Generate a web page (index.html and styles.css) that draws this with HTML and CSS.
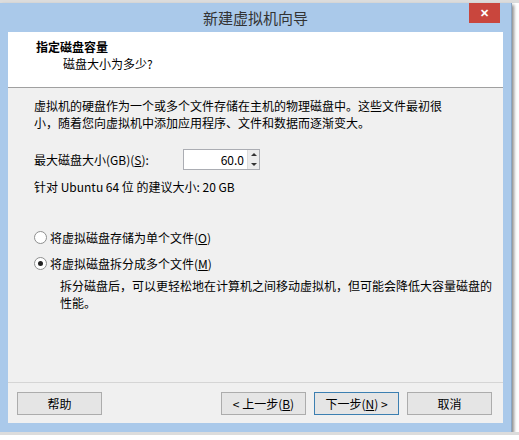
FILE: index.html
```html
<!DOCTYPE html>
<html lang="zh-CN">
<head>
    <meta charset="utf-8">
    <title>新建虚拟机向导</title>
    <link rel="stylesheet" href="styles.css">
</head>
<body>
    <div class="window">
        <div class="titlebar">
            <span class="title">新建虚拟机向导</span>
            <button type="button" class="close_button">✕</button>
        </div>
        <div class="client">
            <div class="header">
                <div class="header_title">指定磁盘容量</div>
                <div class="header_sub">磁盘大小为多少?</div>
            </div>
            <div class="content">
                <p class="intro">虚拟机的硬盘作为一个或多个文件存储在主机的物理磁盘中。这些文件最初很<br>小，随着您向虚拟机中添加应用程序、文件和数据而逐渐变大。</p>

                <div class="size_row">
                    <label for="disk_size">最大磁盘大小(GB)(<u>S</u>):</label>
                    <div class="spin_box">
                        <input type="text" id="disk_size" value="60.0">
                        <div class="spin_buttons">
                            <span class="spin_up"></span>
                            <span class="spin_down"></span>
                        </div>
                    </div>
                </div>
                <div class="hint">针对 Ubuntu 64 位 的建议大小: 20 GB</div>

                <div class="radio_group">
                    <label class="radio"><span class="radio_dot"></span>将虚拟磁盘存储为单个文件(<u>O</u>)</label>
                    <label class="radio"><span class="radio_dot checked"></span>将虚拟磁盘拆分成多个文件(<u>M</u>)</label>
                    <p class="radio_note">拆分磁盘后，可以更轻松地在计算机之间移动虚拟机，但可能会降低大容量磁盘的<br>性能。</p>
                </div>
            </div>
            <div class="footer">
                <button type="button" class="btn">帮助</button>
                <div class="nav_buttons">
                    <button type="button" class="btn">&lt; 上一步(<u>B</u>)</button>
                    <button type="button" class="btn default">下一步(<u>N</u>) &gt;</button>
                    <button type="button" class="btn">取消</button>
                </div>
            </div>
        </div>
    </div>
</body>
</html>
```

FILE: styles.css
```css
body {
    margin: 0;
    padding-top: 3px;
    background: linear-gradient(#dcdcdc 0, #dcdcdc 3px, #fff 3px);
    font-family: "Microsoft YaHei", "Noto Sans CJK SC", sans-serif;
    font-size: 12px;
    color: #000;
}
.window {
    width: 495px;
    padding: 0 8px 9px 8px;
    background-color: #aac9ea;
    border-right: 1px solid #8aa6c4;
    box-shadow: 2px 2px 3px rgba(0, 0, 0, 0.45);
}
.titlebar {
    position: relative;
    height: 29px;
    display: flex;
    align-items: center;
    justify-content: center;
}
.title {
    font-size: 15px;
    color: #333;
}
.close_button {
    position: absolute;
    right: 3px;
    top: 0;
    width: 31px;
    height: 20px;
    border: none;
    background-color: #c9463d;
    color: #fff;
    font-size: 11px;
    font-weight: bold;
    padding: 0;
}
.client {
    background-color: #f0f0f0;
    height: 391px;
    display: flex;
    flex-direction: column;
}
.header {
    background-color: #fff;
    height: 56px;
    border-bottom: 1px solid #a0a0a0;
    padding: 0 0 0 28px;
    box-sizing: border-box;
}
.header_title {
    font-weight: bold;
    padding-top: 6px;
    line-height: 17px;
}
.header_sub {
    padding-left: 27px;
    line-height: 17px;
}
.content {
    flex: 1;
    padding: 9px 12px 0 26px;
    white-space: nowrap;
}
.intro {
    margin: 0;
    line-height: 17px;
}
.size_row {
    display: flex;
    align-items: center;
    margin-top: 18px;
}
.size_row label {
    width: 149px;
}
.spin_box {
    display: flex;
    width: 77px;
    height: 21px;
    border: 1px solid #abadb3;
    background-color: #fff;
    box-sizing: border-box;
}
.spin_box input {
    width: 60px;
    border: none;
    padding: 0 3px 0 0;
    text-align: right;
    font: inherit;
    outline: none;
}
.spin_buttons {
    flex: 1;
    display: flex;
    flex-direction: column;
    border-left: 1px solid #dcdcdc;
}
.spin_up, .spin_down {
    flex: 1;
    display: flex;
    align-items: center;
    justify-content: center;
    background-color: #ececec;
}
.spin_up::after {
    content: "";
    border-left: 3px solid transparent;
    border-right: 3px solid transparent;
    border-bottom: 3px solid #333;
}
.spin_down::after {
    content: "";
    border-left: 3px solid transparent;
    border-right: 3px solid transparent;
    border-top: 3px solid #333;
}
.hint {
    margin-top: 8px;
    line-height: 17px;
}
.radio_group {
    margin-top: 34px;
}
.radio {
    display: flex;
    align-items: center;
    line-height: 17px;
    margin-bottom: 9px;
}
.radio_dot {
    width: 11px;
    height: 11px;
    border: 1px solid #8e8f8f;
    border-radius: 50%;
    background-color: #fff;
    margin-right: 3px;
    display: flex;
    align-items: center;
    justify-content: center;
}
.radio_dot.checked::after {
    content: "";
    width: 5px;
    height: 5px;
    border-radius: 50%;
    background-color: #222;
}
.radio_note {
    margin: -4px 0 0 0;
    padding-left: 26px;
    line-height: 17px;
}
.footer {
    border-top: 1px solid #d5d5d5;
    display: flex;
    justify-content: space-between;
    align-items: center;
    padding: 9px 11px 8px 9px;
}
.nav_buttons {
    display: flex;
    gap: 8px;
}
.btn {
    width: 85px;
    height: 23px;
    border: 1px solid #acacac;
    background-color: #e5e5e5;
    font: inherit;
    padding: 0;
}
.btn.default {
    border-color: #3c7fb1;
}
```
